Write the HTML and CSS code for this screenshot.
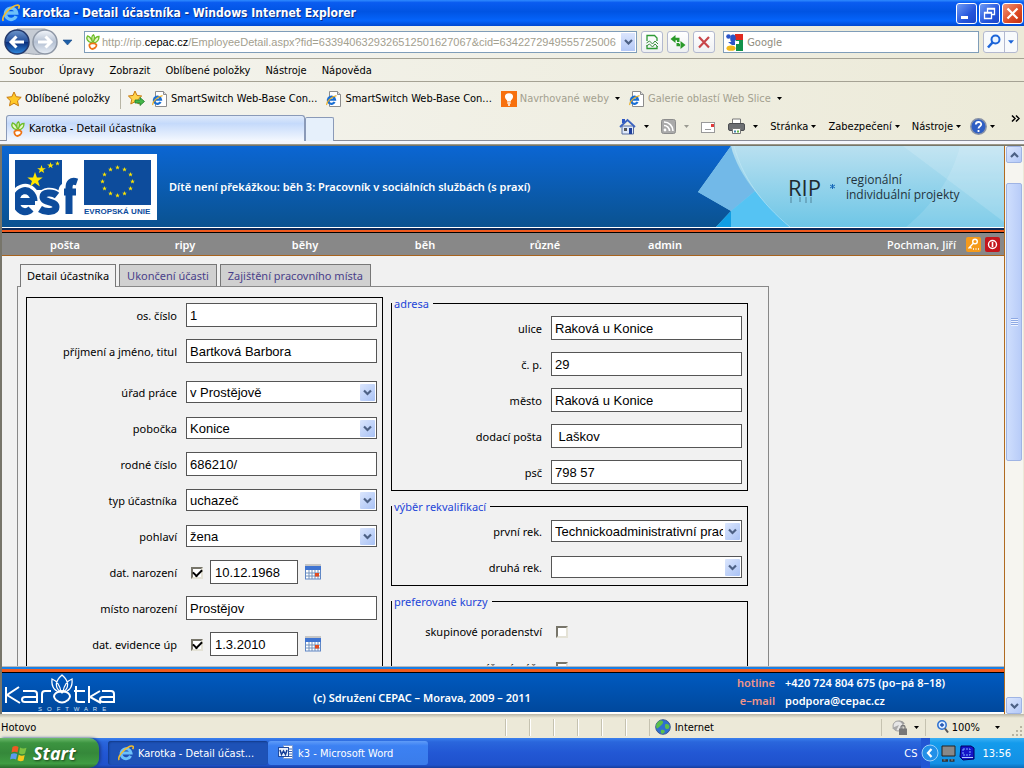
FILE: index.html
```html
<!DOCTYPE html>
<html lang="cs">
<head>
<meta charset="utf-8">
<title>Karotka - Detail účastníka</title>
<link rel="stylesheet" href="styles.css">
</head>
<body>
<svg class="defs" aria-hidden="true">
  <defs>
    <linearGradient id="blueBall" x1="0" y1="0" x2="0" y2="1"><stop offset="0" stop-color="#6f97cc"/><stop offset=".48" stop-color="#25509c"/><stop offset=".52" stop-color="#0b2f7d"/><stop offset="1" stop-color="#2f8ae0"/></linearGradient>
    <linearGradient id="greyBall" x1="0" y1="0" x2="0" y2="1"><stop offset="0" stop-color="#f4f7fb"/><stop offset=".5" stop-color="#b4c0d2"/><stop offset="1" stop-color="#e8eef6"/></linearGradient>
    <symbol id="ie" viewBox="0 0 16 16"><path d="M12.600 10.800A5 5 0 1 1 13 8H4.600" fill="none" stroke="#6cc0fa" stroke-width="3"/><path d="M1.200 15C-1 12 6 3.500 12 1.300 15.500.200 16 2 14.600 4.200" fill="none" stroke="#f3bd2e" stroke-width="1.500"/></symbol>
    <symbol id="iepage" viewBox="0 0 16 16"><path d="M3.500.500h8l3 3v12h-11z" fill="#fff" stroke="#8d8d8d"/><path d="M11.500.500v3h3" fill="#ddd" stroke="#8d8d8d"/><path d="M8.600 11A3.600 3.600 0 1 1 9 8.600H3" fill="none" stroke="#1a6fd4" stroke-width="2.200"/><path d="M.8 14C0 11.500 5 5.500 10.500 4.600" fill="none" stroke="#e9b02a" stroke-width="1.200"/></symbol>
    <symbol id="carrot" viewBox="0 0 14 16"><path d="M6 9C1 8 0 4 1.500 2c2.500.5 4 3 5 6C5.500 4.500 6 1.500 7.500.8 9 2.500 8.500 5 7.300 8 8.300 5 10.500 2.500 13 2.500 13 6 11 8.500 7.500 9z" fill="#eaf7c8" stroke="#6fbe2c" stroke-width="1.300"/><path d="M3.500 10.500c1-1.800 6.500-1.500 7 .5.300 2-2.500 3.800-4.500 4-2-.5-3-3-2.500-4.500z" fill="#fff" stroke="#ee7416" stroke-width="1.800"/></symbol>
    <symbol id="star" viewBox="0 0 16 16"><path d="M8 1l2.200 4.700 5 .6-3.700 3.500 1 5L8 12.300 3.500 14.800l1-5L.8 6.300l5-.6z" fill="#ffc928" stroke="#c87a10"/></symbol>
    <symbol id="tri" viewBox="0 0 5 3"><path d="M0 0h5L2.500 3z" fill="currentColor"/></symbol>
    <symbol id="chev" viewBox="0 0 9 6"><path d="M1 1l3.500 3.500L8 1" fill="none" stroke="#4d6185" stroke-width="2.200"/></symbol>
    <symbol id="cal" viewBox="0 0 16 16"><path d="M.5 1h15" stroke="#444" stroke-dasharray="1 1"/><rect x=".5" y="2.500" width="15" height="12.500" fill="#fff" stroke="#5e86c6"/><rect x="0" y="2" width="16" height="4" fill="#3f74d1"/><path d="M.5 9h15M.5 12h15M4 6v9M7 6v9M10 6v9M13 6v9" stroke="#7292bd"/><rect x="10" y="9" width="4" height="3.500" fill="#e24a1e"/></symbol>
    <symbol id="eustar" viewBox="-5 -5 10 10"><path d="M0-5L1.200-1.500H4.800L1.900.6 3 4 0 1.900-3 4-1.900.6-4.800-1.500H-1.200z" fill="#ffe600"/></symbol>
  </defs>
</svg>

<div class="window">
  <header class="titlebar">
    <svg class="i18"><use href="#ie"/></svg>
    <h1>Karotka - Detail účastníka - Windows Internet Explorer</h1>
    <div class="winbtns">
      <button class="wb" aria-label="Minimalizovat"><svg viewBox="0 0 19 19"><rect x="4" y="12" width="7" height="3" fill="#fff"/></svg></button>
      <button class="wb" aria-label="Obnovit"><svg viewBox="0 0 19 19"><path d="M7.500 8V4.500h7v6H12M7 5h8" fill="none" stroke="#fff" stroke-width="1.300"/><path d="M4.500 8.500h7v6h-7zM4 9h8" fill="none" stroke="#fff" stroke-width="1.300"/></svg></button>
      <button class="wb close" aria-label="Zavřít"><svg viewBox="0 0 19 19"><path d="M4.500 4.500l10 10M14.500 4.500l-10 10" stroke="#fff" stroke-width="2.200"/></svg></button>
    </div>
  </header>

  <div class="navrow">
    <div class="travel">
      <svg width="76" height="30" viewBox="0 0 76 30" aria-hidden="true">
        <path d="M17 2h28a13 13 0 0 1 0 24c-10 4-18-2-28 1z" fill="#c6ccd4" stroke="#9ba3ae"/>
        <circle cx="17" cy="15" r="12" fill="url(#blueBall)" stroke="#24396b" stroke-width="1.500"/>
        <path d="M11 15h13M16.500 9.500L11 15l5.500 5.500" fill="none" stroke="#fff" stroke-width="3"/>
        <circle cx="45" cy="15" r="12" fill="url(#greyBall)" stroke="#8e97a5" stroke-width="1.500"/>
        <path d="M38 15h13M45.500 9.500L51 15l-5.500 5.500" fill="none" stroke="#fff" stroke-width="3"/>
        <path d="M63 13h9l-4.500 5z" fill="#1d5fa8" stroke="#174a87" stroke-width=".6"/>
      </svg>
    </div>
    <div class="address">
      <svg class="i16"><use href="#carrot"/></svg>
      <div class="url" role="textbox" aria-label="Adresa">http://rip.<b>cepac.cz</b>/EmployeeDetail.aspx?fid=633940632932651250162&#55;067&amp;cid=6342272949555725006</div>
      <button class="drop" aria-label="Historie adres"><svg width="9" height="6"><use href="#chev"/></svg></button>
    </div>
    <button class="nb" aria-label="Kompatibilní zobrazení"><svg class="i16" viewBox="0 0 16 16"><path d="M3 7V1.500h7.500L13 4v3M3 11v3.500h10V12" fill="none" stroke="#2f9a35" stroke-width="1.300"/><path d="M2.500 9l3-2 3 3 2.500-3 3 3M2.500 12l3-2 3 3 2.500-3 3 3" fill="none" stroke="#3a8f3e"/></svg></button>
    <button class="nb" aria-label="Aktualizovat"><svg class="i16" viewBox="0 0 16 16"><path d="M5.500 1v8L.5 5zM5 3.700h4.500V8H7V6.200H5z" fill="#2a9a2a"/><path d="M10.500 7v8l5-4zM11 12.300H6.500V9H9v.8h2z" fill="#2a9a2a"/></svg></button>
    <button class="nb" aria-label="Zastavit"><svg class="i16" viewBox="0 0 16 16"><path d="M3 3l10 10.500M13 3L3 13.500" stroke="#c8464a" stroke-width="2.200"/></svg></button>
    <div class="search">
      <svg class="i17" viewBox="0 0 17 17"><rect width="17" height="17" fill="#fff"/><path d="M9 0h8v6H9z" fill="#e02a20"/><path d="M10 6h7v11H10z" fill="#12924a"/><circle cx="2.500" cy="2.500" r="2.300" fill="#2a55c8"/><ellipse cx="7" cy="4.500" rx="2.800" ry="4" fill="#2a55c8"/><path d="M2 8l7 0v3H6z" fill="#2a55c8"/><ellipse cx="5" cy="14.200" rx="4.500" ry="2.600" fill="#f0b81c"/><path d="M10 7h3v3h-3z" fill="#fff"/></svg>
      <input type="text" placeholder="Google" aria-label="Hledat">
    </div>
    <div class="go">
      <button aria-label="Hledat"><svg class="i16" viewBox="0 0 16 16"><circle cx="9.500" cy="5.500" r="4" fill="#eaf4ff" stroke="#1c64d8" stroke-width="2"/><path d="M6.500 8.500L2 13.500" stroke="#1c64d8" stroke-width="2.600"/></svg></button>
      <button class="thin" aria-label="Možnosti hledání"><svg class="tri"><use href="#tri"/></svg></button>
    </div>
  </div>

  <nav class="menurow" aria-label="Nabídka">
    <a href="#">Soubor</a><a href="#">Úpravy</a><a href="#">Zobrazit</a><a href="#">Oblíbené položky</a><a href="#">Nástroje</a><a href="#">Nápověda</a>
  </nav>

  <div class="favrow">
    <button class="fav first"><svg class="i16"><use href="#star"/></svg>Oblíbené položky</button>
    <button class="addfav" aria-label="Přidat"><svg class="i17" viewBox="0 0 17 17"><path d="M7 1l2 4.400 4.700.6-3.500 3.300 1 4.700L7 11.700 2.800 14l1-4.700L.4 6l4.700-.6z" fill="#ffd34a" stroke="#c87a10"/><path d="M7 10h5V7.500l4.500 4-4.500 4V13H7z" fill="#45b649" stroke="#1f7d2a" stroke-width=".8"/></svg></button>
    <button class="fav"><svg class="i16"><use href="#iepage"/></svg>SmartSwitch Web-Base Con...</button>
    <button class="fav"><svg class="i16"><use href="#iepage"/></svg>SmartSwitch Web-Base Con...</button>
    <button class="fav dim"><svg class="i16" viewBox="0 0 16 16"><rect width="16" height="16" fill="#f7700e"/><path d="M8 2.200c5 0 5 5 2 7v1.300H6V9.200c-3-2-3-7 2-7z" fill="#fff"/><path d="M6.300 12h3.400M7 14h2" stroke="#fff" stroke-width="1.300"/></svg>Navrhované weby<svg class="tri"><use href="#tri"/></svg></button>
    <button class="fav dim"><svg class="i16"><use href="#iepage"/></svg>Galerie oblastí Web Slice<svg class="tri"><use href="#tri"/></svg></button>
  </div>

  <div class="tabrow">
    <button class="tab"><svg class="i16"><use href="#carrot"/></svg>Karotka - Detail účastníka</button>
    <button class="newtab" aria-label="Nová karta"></button>
    <div class="cmds">
      <button class="cmd" aria-label="Domů"><svg class="i17" viewBox="0 0 17 17"><path d="M3 1h3v4H3z" fill="#2d56c4"/><path d="M3 8h11.500v8H3z" fill="#dfe9fb" stroke="#5a6f9e"/><path d="M1 9l7.500-7L16 9" fill="none" stroke="#3c63c0" stroke-width="1.800"/><path d="M10 10h3v6h-3z" fill="#1f3f9c"/><path d="M5 10h3v3H5z" fill="#555"/></svg><svg class="tri wide"><use href="#tri"/></svg></button>
      <button class="cmd dim" aria-label="Kanály"><svg class="i15" viewBox="0 0 15 15"><rect x=".5" y=".5" width="14" height="14" rx="2" fill="#aaa" stroke="#8c8c8c"/><circle cx="4" cy="11" r="1.400" fill="#fff"/><path d="M3 6.500a5.500 5.500 0 0 1 5.500 5.500M3 3a9 9 0 0 1 9 9" fill="none" stroke="#fff" stroke-width="1.600"/></svg><svg class="tri wide pale"><use href="#tri"/></svg></button>
      <button class="cmd" aria-label="Pošta"><svg width="15" height="12" viewBox="0 0 15 12"><rect x=".5" y="1.500" width="13" height="10" fill="#fff" stroke="#999"/><rect x="10" y="3" width="3" height="3" fill="#e03a3a"/><path d="M4 8.500h6" stroke="#999"/></svg></button>
      <button class="cmd" aria-label="Tisk"><svg class="i17" viewBox="0 0 17 17"><path d="M4.500 1h8v5h-8z" fill="#fff" stroke="#777"/><rect x=".5" y="5.500" width="16" height="7" rx="1.500" fill="#6d6f73" stroke="#4c4e52"/><path d="M4.500 10.500h8v5h-8z" fill="#fff" stroke="#777"/><path d="M6 12.500h2v2H6z" fill="#48a"/><path d="M9 12.500h2v2H9z" fill="#6b4"/></svg><svg class="tri wide"><use href="#tri"/></svg></button>
      <button class="cmd">Stránka<svg class="tri"><use href="#tri"/></svg></button>
      <button class="cmd">Zabezpečení<svg class="tri"><use href="#tri"/></svg></button>
      <button class="cmd">Nástroje<svg class="tri"><use href="#tri"/></svg></button>
      <button class="cmd tight" aria-label="Nápověda"><svg class="i17" viewBox="0 0 17 17"><circle cx="8.500" cy="8.500" r="7.700" fill="#2f5fc4" stroke="#8a93a6" stroke-width="1.500"/><path d="M5.800 6.500c.2-3.500 5.600-3.200 5.400 0-.1 1.800-2.700 1.700-2.700 4M8.500 12v2" fill="none" stroke="#fff" stroke-width="1.800"/></svg><svg class="tri"><use href="#tri"/></svg></button>
      <button class="more" aria-label="Další"><svg width="9" height="7" viewBox="0 0 9 7"><path d="M1 .5l3 3-3 3M5 .5l3 3-3 3" fill="none" stroke="#000" stroke-width="1.500"/></svg></button>
    </div>
  </div>

  <div class="viewport">
    <div class="page">
      <div class="banner">
        <div class="logos">
          <svg width="148" height="66" viewBox="0 0 148 66" role="img" aria-label="esf, Evropská unie">
            <rect width="148" height="66" fill="#fff"/>
            <path d="M6 6h47v24c-4 2-3 8-5 10H6z" fill="#0d4c9c"/>
            <path d="M6 47h20a10 12 0 1 0-3 9" fill="none" stroke="#fff" stroke-width="11"/>
            <path d="M28 36h18v24H28z" fill="#fff"/>
            <path d="M6 47.500h20M25 47a9 10.500 0 1 0-3 8" fill="none" stroke="#0d4c9c" stroke-width="7"/>
            <path d="M49 42c-6-5-15-4-15 1 0 6 13 3 13 10 0 6-11 6-16 1" fill="none" stroke="#fff" stroke-width="10"/>
            <path d="M48 41.500c-5-4-14-3-14 1.500 0 6 13 4 13 10 0 5-10 6-16 2" fill="none" stroke="#0d4c9c" stroke-width="7"/>
            <path d="M69 28c-7-2-9 1-9 6v26M54 38h13" fill="none" stroke="#fff" stroke-width="11"/>
            <path d="M68 28c-6-2-8 1-8 6v26M55 38h12" fill="none" stroke="#0d4c9c" stroke-width="7"/>
            <path d="M0 0h6v66H0z" fill="#fff"/>
            <use href="#eustar" x="18" y="18" width="16" height="16"/><use href="#eustar" x="28" y="11" width="9" height="9"/><use href="#eustar" x="38" y="8" width="7" height="7"/><use href="#eustar" x="46" y="7" width="5" height="5"/>
            <rect x="75" y="6" width="67" height="45" fill="#0d4c9c"/>
            <use href="#eustar" x="106" y="11" width="5" height="5"/><use href="#eustar" x="113" y="13" width="5" height="5"/><use href="#eustar" x="119" y="18" width="5" height="5"/><use href="#eustar" x="121" y="25" width="5" height="5"/><use href="#eustar" x="119" y="32" width="5" height="5"/><use href="#eustar" x="113" y="37" width="5" height="5"/><use href="#eustar" x="106" y="39" width="5" height="5"/><use href="#eustar" x="99" y="37" width="5" height="5"/><use href="#eustar" x="93" y="32" width="5" height="5"/><use href="#eustar" x="91" y="25" width="5" height="5"/><use href="#eustar" x="93" y="18" width="5" height="5"/><use href="#eustar" x="99" y="13" width="5" height="5"/>
            <text x="75" y="60" class="eutext">EVROPSKÁ UNIE</text>
          </svg>
        </div>
        <h2>Dítě není překážkou: běh 3: Pracovník v sociálních službách (s praxí)</h2>
        <div class="rip">
          <svg class="ripart" viewBox="0 0 306 81" preserveAspectRatio="none" aria-hidden="true">
            <defs><linearGradient id="sky" x1="0" y1="0" x2="0" y2="1"><stop offset="0" stop-color="#b9e0f0"/><stop offset="1" stop-color="#6ec6e6"/></linearGradient></defs>
            <path d="M33 0h273v81H18l15-16L0 46z" fill="url(#sky)"/>
            <path d="M33 0L0 46l33 19 24-20C46 32 36 14 33 0z" fill="#72b9e8"/>
            <path d="M33 65l24-20c12 15 24 26 35 36H33z" fill="#55c3f3"/>
            <path d="M33 65v16H18z" fill="#109ee4"/>
            <path d="M262 0c-8 32-28 60-54 81h98V0z" fill="#fff" opacity=".12"/>
            <path d="M205 0l101 76V0z" fill="#fff" opacity=".15"/>
            <path d="M36 0c8 30 26 56 56 81" fill="none" stroke="#c5e9f7" opacity=".6"/>
          </svg>
          <span class="ripname">RIP</span>
          <svg class="fade" width="26" height="7" viewBox="0 0 26 7" aria-hidden="true"><path d="M2 0v6M11 0v5M17 0v6M22 0v6" stroke="#3a6477" stroke-width="1.500" opacity=".45"/></svg>
          <svg class="snow" width="5" height="5" viewBox="0 0 5 5" aria-hidden="true"><path d="M2.500 0v5M0 1l5 3M0 4l5-3" stroke="#1768b8"/></svg>
          <span class="ripsub">regionální<br>individuální projekty</span>
        </div>
      </div>

      <nav class="mainnav">
        <ul><li><a href="#">pošta</a></li><li><a href="#">ripy</a></li><li><a href="#">běhy</a></li><li><a href="#">běh</a></li><li><a href="#">různé</a></li><li><a href="#">admin</a></li></ul>
        <div class="user"><span>Pochman, Jiří</span>
          <button aria-label="Změna hesla"><svg width="15" height="15" viewBox="0 0 15 15"><rect width="15" height="15" rx="2" fill="#f59a1b"/><circle cx="9" cy="4.500" r="2.300" fill="none" stroke="#fff" stroke-width="1.400"/><path d="M7.500 6L2.500 11.500M4 10l1.500 1.500M7 12h1M9.500 12h1M12 12h1" stroke="#fff" stroke-width="1.300"/></svg></button>
          <button aria-label="Odhlásit"><svg width="15" height="15" viewBox="0 0 15 15"><rect width="15" height="15" rx="2" fill="#c4161c"/><circle cx="7.500" cy="7.500" r="4" fill="none" stroke="#fff" stroke-width="1.400"/><path d="M7.500 5v5" stroke="#fff" stroke-width="1.600"/></svg></button>
        </div>
      </nav>

      <main class="content">
        <div class="ptabs">
          <a href="#" class="on">Detail účastníka</a><a href="#">Ukončení účasti</a><a href="#">Zajištění pracovního místa</a>
        </div>
        <form class="panel">
          <div class="box">
            <div class="row"><label for="f1">os. číslo</label><input id="f1" type="text" value="1"></div>
            <div class="row spaced"><label for="f2">příjmení a jméno, titul</label><input id="f2" type="text" value="Bartková Barbora"></div>
            <div class="row"><label for="f3">úřad práce</label><span class="sel"><select id="f3"><option>v Prostějově</option></select><svg><use href="#chev"/></svg></span></div>
            <div class="row"><label for="f4">pobočka</label><span class="sel"><select id="f4"><option>Konice</option></select><svg><use href="#chev"/></svg></span></div>
            <div class="row"><label for="f5">rodné číslo</label><input id="f5" type="text" value="686210/"></div>
            <div class="row"><label for="f6">typ účastníka</label><span class="sel"><select id="f6"><option>uchazeč</option></select><svg><use href="#chev"/></svg></span></div>
            <div class="row"><label for="f7">pohlaví</label><span class="sel"><select id="f7"><option>žena</option></select><svg><use href="#chev"/></svg></span></div>
            <div class="row"><label for="f8">dat. narození</label><span class="date"><input type="checkbox" checked aria-label="dat. narození zadáno"><input id="f8" type="text" value="10.12.1968"><svg class="i16"><use href="#cal"/></svg></span></div>
            <div class="row"><label for="f9">místo narození</label><input id="f9" type="text" value="Prostějov"></div>
            <div class="row"><label for="f10">dat. evidence úp</label><span class="date"><input type="checkbox" checked aria-label="dat. evidence zadáno"><input id="f10" type="text" value="1.3.2010"><svg class="i16"><use href="#cal"/></svg></span></div>
            <div class="row"></div>
          </div>
          <div class="col">
            <fieldset>
              <legend>adresa</legend>
              <div class="row"><label for="g1">ulice</label><input id="g1" type="text" value="Raková u Konice"></div>
              <div class="row"><label for="g2">č. p.</label><input id="g2" type="text" value="29"></div>
              <div class="row"><label for="g3">město</label><input id="g3" type="text" value="Raková u Konice"></div>
              <div class="row"><label for="g4">dodací pošta</label><input id="g4" type="text" value=" Laškov"></div>
              <div class="row"><label for="g5">psč</label><input id="g5" type="text" value="798 57"></div>
            </fieldset>
            <fieldset>
              <legend>výběr rekvalifikací</legend>
              <div class="row"><label for="g6">první rek.</label><span class="sel"><select id="g6"><option>Technickoadministrativní pracovník</option></select><svg><use href="#chev"/></svg></span></div>
              <div class="row"><label for="g7">druhá rek.</label><span class="sel"><select id="g7"><option></option></select><svg><use href="#chev"/></svg></span></div>
            </fieldset>
            <fieldset class="courses">
              <legend>preferované kurzy</legend>
              <div class="row"><label for="g8">skupinové poradenství</label><span class="chk"><input id="g8" type="checkbox"></span></div>
              <div class="row"><label for="g9">zvýšená péče</label><span class="chk"><input id="g9" type="checkbox"></span></div>
            </fieldset>
          </div>
        </form>
      </main>

      <footer class="foot">
        <svg width="112" height="40" viewBox="0 0 112 40" role="img" aria-label="Karotka Software">
          <g fill="none" stroke="#fff" stroke-width="2">
            <path d="M2 13v16M15 13L3 21l13 8"/>
            <path d="M19 17h11q3 0 3 3v8H21q-3 0-3-2.500T21 23h12"/>
            <path d="M38 29v-9q0-3 3-3h6"/>
            <path d="M52 19q6-4 12 0 4 3 0 7-6 5-12 0-4-4 0-7z"/>
            <path d="M72 12v14q0 2 3 2h6M70 17h11"/>
            <path d="M85 12v17M96 17l-10 6 11 6"/>
            <path d="M98 17h9q3 0 3 3v8h-11q-3 0-3-2.500t3-2.500h11"/>
          </g>
          <g fill="none" stroke="#fff" stroke-width="1.300"><path d="M58 19c-8-5-7-12 0-18 7 6 8 13 0 18zM57 18c-5 0-10-4-9-13 5 2 8 6 9 13zM59 18c5 0 10-4 9-13-5 2-8 6-9 13z"/></g>
          <text x="34" y="37" class="soft">S   O   F   T   W   A   R   E</text>
        </svg>
        <p class="copy">(c) Sdružení CEPAC – Morava, 2009 – 2011</p>
        <dl><dt>hotline</dt><dd>+420 724 804 675 (po–pá 8–18)</dd><dt>e–mail</dt><dd>podpora@cepac.cz</dd></dl>
      </footer>
    </div>
    <div class="scroll" aria-hidden="true">
      <span class="sb"><svg class="up" width="9" height="6"><use href="#chev"/></svg></span>
      <div class="track"><span class="thumb"><i></i></span></div>
      <span class="sb"><svg width="9" height="6"><use href="#chev"/></svg></span>
    </div>
  </div>

  <div class="status">
    <span class="done">Hotovo</span>
    <i class="cell"></i><i class="cell"></i><i class="cell"></i><i class="cell"></i><i class="cell"></i><i class="cell"></i>
    <span class="zone"><svg class="i16" viewBox="0 0 16 16"><circle cx="8" cy="8" r="7.300" fill="#2f6fd0" stroke="#3c5a92"/><path d="M3 3c3-3 6-1 5 1S5 7 3 9 0 5 3 3zM11 5c3 0 4 2 3 4s-4 1-4-1 0-3 1-3zM6 11c3-1 5 1 3 3s-4 0-3-3z" fill="#5cbf4a"/></svg>Internet</span>
    <span class="lock"><svg class="i17" viewBox="0 0 17 17"><path d="M3 8a5.500 5.500 0 0 1 10-3" fill="none" stroke="#999" stroke-width="2"/><circle cx="7" cy="7" r="5" fill="#e6e6e6" stroke="#a2a2a2"/><path d="M1 9l4 3 3-6" fill="#aaa"/><rect x="8" y="9.500" width="8" height="6.500" fill="#777"/><path d="M10 10V8c0-2 4-2 4 0v2" fill="none" stroke="#777" stroke-width="1.300"/></svg><svg class="tri"><use href="#tri"/></svg></span>
    <span class="zoom"><svg width="12" height="14" viewBox="0 0 12 14"><circle cx="5" cy="5" r="4.200" fill="#dcecff" stroke="#2b6fd0" stroke-width="1.500"/><path d="M3 5h4M5 3v4" stroke="#1b4fb0" stroke-width="1.300"/><path d="M8 8.500l3 4" stroke="#555" stroke-width="2"/></svg>100%<svg class="tri"><use href="#tri"/></svg></span>
    <svg class="grip" width="12" height="12" viewBox="0 0 12 12"><path d="M9 1h2M9 5h2M5 5h2M9 9h2M5 9h2M1 9h2" stroke="#b8b4a2" stroke-width="2"/></svg>
  </div>

  <div class="taskbar">
    <button class="start"><svg width="18" height="17" viewBox="0 0 18 17"><path d="M2.500 2q3-2 6 0L7.500 7.500q-3-1.500-6 0z" fill="#ee5a24"/><path d="M10 2.500q3 2 6.500.3L15 8.500q-3 1.500-6-.3z" fill="#7cc142"/><path d="M1.200 9q3-1.700 6 0L6 14.500q-3-1.500-6 0z" fill="#5b9af0"/><path d="M8.700 9.700q3 2 6 .3L13.500 15.500q-3 1.700-6-.3z" fill="#f8c81c"/></svg>Start</button>
    <button class="task active"><svg class="i16"><use href="#ie"/></svg>Karotka - Detail účast...</button>
    <button class="task"><svg class="i16" viewBox="0 0 16 16"><path d="M5.500.500h9v13h-9z" fill="#fff" stroke="#7c9ad0"/><path d="M11 4h3M11 6.500h3M11 9h3M7 11.500h7" stroke="#3a62b0"/><rect x=".5" y="2.500" width="10" height="9" fill="#e6eefb" stroke="#1e4aa0"/><path d="M2 5l1.500 4.500L5.500 6l2 3.500L9 5" fill="none" stroke="#123c96" stroke-width="1.500"/></svg>k3 - Microsoft Word</button>
    <span class="lang">CS</span>
    <div class="tray">
      <button aria-label="Skryté ikony"><svg width="18" height="18" viewBox="0 0 18 18"><circle cx="9" cy="9" r="8" fill="#2290e8" stroke="#9cd0f8"/><path d="M10.500 5L7 9l3.500 4" fill="none" stroke="#fff" stroke-width="2.200"/></svg></button>
      <svg width="16" height="17" viewBox="0 0 16 17"><path d="M1 1h13v10H1z" fill="#888" stroke="#222"/><path d="M1 15.500h6M8.500 15.500h5" stroke="#333" stroke-width="2.500"/><path d="M2.500 15h2M10 15h2" stroke="#999"/></svg>
      <svg width="16" height="16" viewBox="0 0 16 16"><path d="M2 1l10 0 3 2v11l-11 1-3-3z" fill="#1414c8" stroke="#000060"/><path d="M4 4h7v6H4z" fill="none" stroke="#7fb0ff" stroke-dasharray="2 1"/><path d="M3 12.500h11" stroke="#b0c8ff"/></svg>
      <time>13:56</time>
    </div>
  </div>
</div>
</body>
</html>
```
FILE: styles.css
```css
* { box-sizing: border-box; }
html, body { height: 100%; margin: 0; }
body { font: 11px "DejaVu Sans Condensed", "Noto Sans", sans-serif; color: #000; background: #ece9d8; }
button { font: inherit; color: inherit; background: none; border: 0; padding: 0; margin: 0; display: flex; align-items: center; white-space: nowrap; }
a { color: inherit; text-decoration: none; }
svg { display: block; flex: none; }
h1, h2, p, ul, dl, dd { margin: 0; padding: 0; }
.defs { position: absolute; width: 0; height: 0; }
.i15 { width: 15px; height: 15px; }
.i16 { width: 16px; height: 16px; }
.i17 { width: 17px; height: 17px; }
.i18 { width: 18px; height: 18px; }
.tri { width: 5px; height: 3px; color: #000; }
.window { display: flex; flex-direction: column; height: 100vh; min-height: 400px; overflow: hidden; }

.titlebar { flex: none; height: 26px; display: flex; align-items: center; gap: 2px; padding: 0 1px 0 2px; background: linear-gradient(#2f8bff 0, #0a5cf0 10%, #0054e3 45%, #0564fb 80%, #0048d0 100%); }
.titlebar h1 { flex: 1; font: bold 12px "DejaVu Sans Condensed", sans-serif; color: #fff; text-shadow: 1px 1px 0 #0b2f86; }
.winbtns { display: flex; gap: 2px; }
.wb { width: 21px; height: 21px; border: 1px solid #fff; border-radius: 3px; background: linear-gradient(135deg, #6f9bf5, #2455dc 60%, #1c46c8); }
.wb.close { background: linear-gradient(135deg, #f0967a, #dd4a24 60%, #c03010); }

.navrow { flex: none; height: 33px; display: flex; align-items: center; padding-right: 6px; background: linear-gradient(90deg, #f6f6f4, #ecead8); border-bottom: 1px solid #a5a294; }
.travel { width: 80px; margin-right: 4px; }
.address { flex: 555; min-width: 0; height: 22px; display: flex; align-items: center; gap: 1px; padding: 0 1px 0 0; background: #fff; border: 1px solid #7f9db9; }
.url { flex: 1; min-width: 0; overflow: hidden; white-space: nowrap; color: #a3a08f; font-family: "Liberation Sans", sans-serif; }
.url b { font-weight: normal; color: #000; }
.drop { width: 14px; height: 18px; justify-content: center; background: linear-gradient(#dbe5fd, #b4c8f6); }
.nb { width: 22px; height: 22px; margin-left: 4px; justify-content: center; border: 1px solid #b3b9cf; border-radius: 3px; background: linear-gradient(#fff, #eef0f2); }
.search { flex: 254; min-width: 0; height: 22px; margin-left: 8px; display: flex; align-items: center; gap: 4px; padding-left: 2px; background: #fff; border: 1px solid #7f9db9; }
.search input { flex: 1; min-width: 0; border: 0; outline: 0; padding: 0; font: inherit; background: none; }
.search input::placeholder { color: #8f8c7e; opacity: 1; }
.go { display: flex; height: 22px; margin-left: 4px; border: 1px solid #b3b9cf; border-radius: 3px; background: #f8fafc; }
.go button { width: 20px; justify-content: center; }
.go .thin { width: 13px; border-left: 1px solid #b3b9cf; }
.go .tri { color: #1c64d8; width: 6px; height: 4px; }

.menurow { flex: none; height: 23px; display: flex; align-items: center; gap: 15px; padding-left: 9px; background: linear-gradient(90deg, #f4f4ef, #ecead8); border-bottom: 1px solid #a5a294; }

.favrow { flex: none; height: 33px; display: flex; align-items: center; padding-left: 6px; background: linear-gradient(90deg, #f5f5f1, #ecead8); }
.fav { gap: 3px; margin-right: 9px; }
.fav.first { margin: 0; padding-right: 10px; height: 20px; border-right: 1px solid #b8b5a5; }
.addfav { margin: 0 7px; }
.dim { color: #a3a08f; }
.dim .tri { margin-left: 3px; }

.tabrow { flex: none; height: 30px; display: flex; align-items: flex-start; padding: 0 4px 0 6px; background: linear-gradient(90deg, #f5f5f1, #ecead8); box-shadow: inset 0 -1px #9b9888, inset 0 -4px #f4f5fb, inset 0 -5px #8a8c98; }
.tab { flex: 0 1 299px; height: 26px; gap: 3px; padding-left: 3px; border: 1px solid #8a9ab8; border-bottom: 0; border-radius: 3px 3px 0 0; background: linear-gradient(#dfeafa, #c5dafb 30%, #f4f8fe); }
.newtab { width: 29px; height: 24px; margin-top: 2px; border: 1px solid #8a9ab8; border-bottom: 0; border-radius: 2px 2px 0 0; background: #e6f0fb; }
.cmds { flex: 1; height: 23px; display: flex; align-items: center; justify-content: flex-end; gap: 12px; }
.cmd { gap: 3px; }
.cmd .wide { margin-left: 5px; }
.pale { opacity: .35; }
.cmd.tight { margin-left: -3px; }
.more { align-self: flex-start; margin-left: 4px; }

.viewport { flex: 1; min-height: 0; display: flex; border-top: 1px solid #77756a; border-left: 2px solid #77756a; background: #f1f1f1; }
.page { flex: 1; min-width: 0; display: flex; flex-direction: column; overflow: hidden; font: 11px "Noto Sans", sans-serif; border-right: 1px solid #b06a20; }
.banner { flex: none; display: flex; align-items: center; height: 87px; padding-left: 7px; background: linear-gradient(#0b66d3, #0a5290 81px, #fff 81px, #fff 82px, #0a2a5c 82px, #0a2a5c 84px, #f05a1e 84px, #f05a1e 86px, #000 86px); }
.logos { align-self: flex-start; padding-top: 8px; }
.eutext { font: bold 8px "Liberation Sans", sans-serif; fill: #0d4c9c; }
.banner h2 { flex: 1; margin: 0 0 6px 12px; font-size: 11px; font-weight: 600; color: #fff; white-space: nowrap; }
.rip { position: relative; align-self: flex-start; width: 306px; height: 81px; display: flex; align-items: center; }
.ripart { position: absolute; inset: 0; width: 100%; height: 100%; }
.ripname { position: relative; margin-left: 90px; font: 22px "Open Sans", sans-serif; color: #1f2a30; }
.fade { position: absolute; left: 91px; top: 51px; }
.snow { position: relative; margin: 0 11px 0 9px; }
.ripsub { position: relative; font: 12px/15px "Open Sans", sans-serif; color: #22333c; white-space: nowrap; }

.mainnav { flex: none; height: 23px; display: flex; align-items: center; justify-content: space-between; padding-right: 4px; background: #888; border-bottom: 1px solid #a8641e; color: #fff; font-weight: 600; }
.mainnav ul { display: flex; list-style: none; padding-left: 3px; }
.mainnav li { width: 120px; text-align: center; }
.user { display: flex; align-items: center; gap: 4px; }
.user span { margin-right: 6px; font-weight: 500; }

.content { flex: 1; min-height: 0; overflow: hidden; padding: 8px 15px 0; }
.ptabs { display: flex; gap: 3px; padding-left: 3px; }
.ptabs a { height: 22px; padding: 0 7px; line-height: 21px; border: 1px solid #777; border-bottom: 0; background: #d0d0d0; color: #4a3f8a; white-space: nowrap; }
.ptabs .on { height: 23px; margin-bottom: -1px; padding: 0 6px; background: #f1f1f1; color: #000; position: relative; }
.panel { width: 752px; max-width: 100%; display: flex; gap: 8px; padding: 10px 8px; border: 1px solid #888; }
.box { width: 357px; box-shadow: inset 0 0 0 1px #000; }
.col { width: 357px; }
.row { height: 36px; display: grid; grid-template-columns: 151px 191px; gap: 9px; align-items: center; }
.row.spaced { margin-bottom: 5px; }
.row label { text-align: right; }
.col .row { grid-template-columns: 150px 191px; }
.box .row label { padding-top: 1px; }
fieldset { margin: 0 0 9px; padding: 0; border: 1px solid #000; min-width: 0; }
legend { padding: 0 4px 0 2px; line-height: 13px; color: #1d45d8; }
.courses .row:first-of-type { margin-top: 5px; }
.row input[type="text"] { width: 100%; height: 24px; padding: 0 3px; border: 1px solid #555; border-radius: 0; background: #fff; font: 13px "Liberation Sans", sans-serif; }
.sel { position: relative; display: block; }
.sel select { width: 100%; height: 22px; appearance: none; padding: 0 18px 0 3px; margin: 0; border: 1px solid #555; border-radius: 0; background: #fff; color: #000; font: 13px "Liberation Sans", sans-serif; display: block; }
.sel svg { position: absolute; right: 2px; top: 3px; width: 15px; height: 17px; padding: 5px 3px; background: linear-gradient(135deg, #dbe6fd, #a9c2f5); border-radius: 1px; }
.date { display: flex; align-items: center; gap: 7px; padding-left: 5px; }
.row .date input[type="text"] { width: 88px; padding-left: 4px; }
input[type="checkbox"] { appearance: none; flex: none; width: 12px; height: 12px; margin: 2px 0 0; background: #fff; border: 2px solid; border-color: #77756a #e4e2d6 #e4e2d6 #77756a; display: grid; place-items: center; }
input[type="checkbox"]:checked::before { content: ""; width: 7px; height: 4px; border: solid #000; border-width: 0 0 2px 2px; transform: rotate(-45deg); margin-bottom: 2px; }
.chk { padding-left: 5px; }

.foot { flex: none; height: 48px; display: grid; grid-template-columns: 268px 300px 1fr; align-items: center; padding: 8px 2px 0; background: linear-gradient(#bbb 0, #bbb 1px, #1a80e6 1px, #1a80e6 3px, #f05a1e 3px, #f05a1e 6px, #000 6px, #000 7px, #005ac0 7px, #00489c 46px, #fff 46px); color: #fff; font-weight: 600; }
.foot svg { margin-bottom: 2px; }
.soft { font: 6px "Liberation Sans", sans-serif; fill: #cfe0f6; white-space: pre; }
.copy { text-align: center; white-space: nowrap; padding-top: 5px; }
.foot dl { display: grid; grid-template-columns: 56px auto; justify-content: start; column-gap: 10px; line-height: 18px; white-space: nowrap; padding-left: 147px; padding-bottom: 6px; }
.foot dt { text-align: right; color: #f0958a; }

.scroll { flex: none; width: 19px; padding: 0 1px; display: flex; flex-direction: column; background: #f6f5f0; border-right: 1px solid #ece9d8; }
.sb { height: 17px; display: grid; place-items: center; border: 1px solid #9fb4e4; border-radius: 2px; background: linear-gradient(135deg, #dbe6fd, #b4c9f8); }
.up { transform: scaleY(-1); }
.track { flex: 1; display: flex; flex-direction: column; padding-top: 20px; }
.thumb { flex: 0 0 54%; display: grid; place-items: center; border: 1px solid #9fb4e4; border-radius: 2px; background: linear-gradient(90deg, #cfdefd, #b8ccf8); }
.thumb i { width: 7px; height: 8px; background: repeating-linear-gradient(#8ea9e4 0, #8ea9e4 1px, #eef3ff 1px, #eef3ff 2px); }

.status { flex: none; height: 24px; display: flex; align-items: center; padding: 2px 1px 0; background: linear-gradient(#b9b6a6 0, #ece9d8 4px); }
.done { flex: 1; }
.cell { width: 24px; height: 17px; border-left: 1px solid #c5c2b0; box-shadow: inset 1px 0 #fff; }
.zone { width: 232px; height: 17px; display: flex; align-items: center; gap: 4px; padding-left: 5px; border-left: 1px solid #c5c2b0; }
.lock { width: 44px; height: 17px; display: flex; align-items: center; gap: 6px; padding-left: 9px; border-left: 1px solid #c5c2b0; }
.zoom { height: 17px; display: flex; align-items: center; gap: 3px; padding-left: 11px; border-left: 1px solid #c5c2b0; }
.zoom .tri { margin: 0 11px 0 12px; }
.grip { align-self: flex-end; }

.taskbar { flex: none; height: 30px; display: flex; align-items: center; color: #fff; background: linear-gradient(#3a80ee 0, #2a66dc 4px, #2257d4 50%, #1f52cc 90%, #173d9c 100%); }
.start { width: 99px; height: 30px; gap: 5px; padding-left: 10px; border-radius: 0 10px 10px 0; background: linear-gradient(#6cba6c 0, #3c9440 5px, #35883a 50%, #3f9c42 85%, #2a6c2c 100%); font: italic bold 18px "Open Sans", sans-serif; text-shadow: 1px 1px 2px #1c4a1c; box-shadow: 2px 0 3px #1c3f94; }
.task { flex: 0 1 160px; height: 24px; gap: 4px; padding-left: 10px; border-radius: 3px; background: linear-gradient(#5f9cf8, #3c81f3 20%, #3a7cea); }
.task.active { margin-left: 9px; padding-left: 10px; background: #1e52b7; box-shadow: inset 1px 1px 2px #123a88; }
.lang { margin-left: auto; margin-right: 4px; }
.tray { height: 30px; display: flex; align-items: center; gap: 2px; padding-right: 13px; background: linear-gradient(90deg, #2257d4 9px, transparent 9px), linear-gradient(#3bb0f4 0, #149bec 5px, #1290e4 85%, #0d6cb8 100%); }
.tray time { margin-left: 5px; }
```
